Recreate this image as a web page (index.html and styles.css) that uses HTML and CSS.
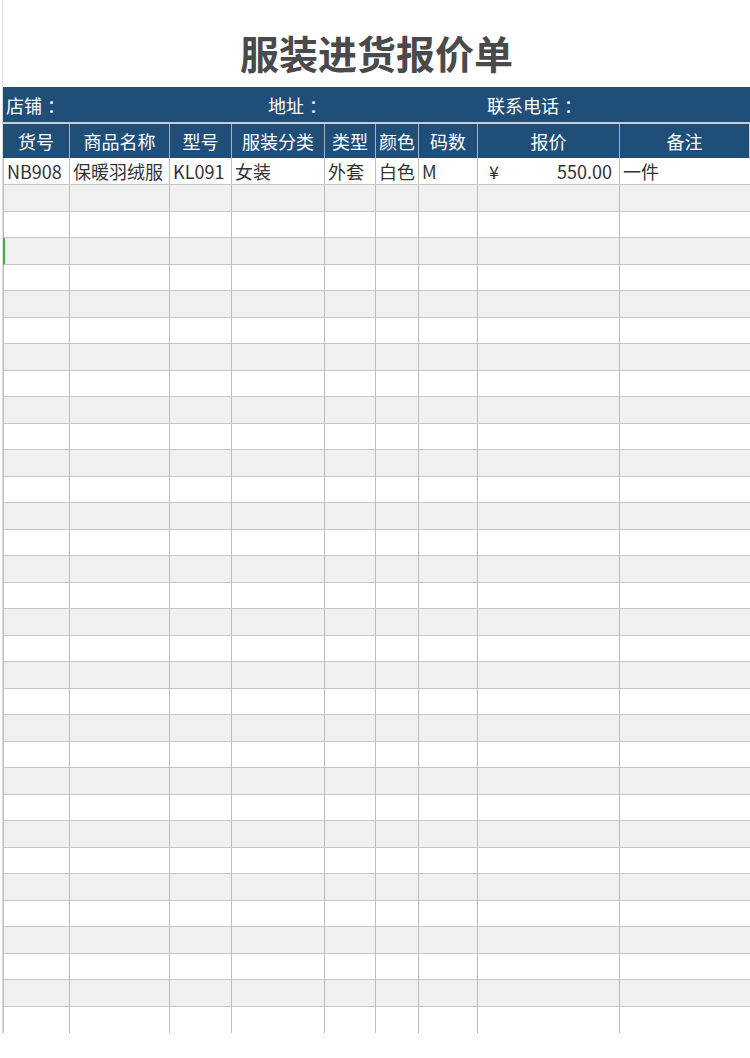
FILE: index.html
```html
<!DOCTYPE html>
<html lang="zh-CN">
<head>
  <meta charset="UTF-8">
  <title>服装进货报价单</title>
  <link rel="stylesheet" href="styles.css">
</head>
<body>

  <div class="sheet">
    <h1 class="title">服装进货报价单</h1>

    <table class="quote">
      <colgroup>
        <col style="width:67px">
        <col style="width:100px">
        <col style="width:62px">
        <col style="width:93px">
        <col style="width:51px">
        <col style="width:43px">
        <col style="width:59px">
        <col style="width:142px">
        <col style="width:130px">
      </colgroup>
      <thead>
        <tr class="info">
          <td colspan="3" class="shop">店铺<span class="colon">：</span></td>
          <td colspan="4" class="addr">地址<span class="colon">：</span></td>
          <td colspan="2" class="tel">联系电话<span class="colon">：</span></td>
        </tr>
        <tr class="cols">
          <th>货号</th>
          <th>商品名称</th>
          <th>型号</th>
          <th>服装分类</th>
          <th>类型</th>
          <th>颜色</th>
          <th>码数</th>
          <th>报价</th>
          <th>备注</th>
        </tr>
      </thead>
      <tbody>
        <tr>
          <td>NB908</td>
          <td>保暖羽绒服</td>
          <td>KL091</td>
          <td>女装</td>
          <td>外套</td>
          <td>白色</td>
          <td>M</td>
          <td><div class="money"><span>¥</span><span>550.00</span></div></td>
          <td>一件</td>
        </tr>
        <tr><td></td><td></td><td></td><td></td><td></td><td></td><td></td><td></td><td></td></tr>
        <tr><td></td><td></td><td></td><td></td><td></td><td></td><td></td><td></td><td></td></tr>
        <tr><td class="sel"></td><td></td><td></td><td></td><td></td><td></td><td></td><td></td><td></td></tr>
        <tr><td></td><td></td><td></td><td></td><td></td><td></td><td></td><td></td><td></td></tr>
        <tr><td></td><td></td><td></td><td></td><td></td><td></td><td></td><td></td><td></td></tr>
        <tr><td></td><td></td><td></td><td></td><td></td><td></td><td></td><td></td><td></td></tr>
        <tr><td></td><td></td><td></td><td></td><td></td><td></td><td></td><td></td><td></td></tr>
        <tr><td></td><td></td><td></td><td></td><td></td><td></td><td></td><td></td><td></td></tr>
        <tr><td></td><td></td><td></td><td></td><td></td><td></td><td></td><td></td><td></td></tr>
        <tr><td></td><td></td><td></td><td></td><td></td><td></td><td></td><td></td><td></td></tr>
        <tr><td></td><td></td><td></td><td></td><td></td><td></td><td></td><td></td><td></td></tr>
        <tr><td></td><td></td><td></td><td></td><td></td><td></td><td></td><td></td><td></td></tr>
        <tr><td></td><td></td><td></td><td></td><td></td><td></td><td></td><td></td><td></td></tr>
        <tr><td></td><td></td><td></td><td></td><td></td><td></td><td></td><td></td><td></td></tr>
        <tr><td></td><td></td><td></td><td></td><td></td><td></td><td></td><td></td><td></td></tr>
        <tr><td></td><td></td><td></td><td></td><td></td><td></td><td></td><td></td><td></td></tr>
        <tr><td></td><td></td><td></td><td></td><td></td><td></td><td></td><td></td><td></td></tr>
        <tr><td></td><td></td><td></td><td></td><td></td><td></td><td></td><td></td><td></td></tr>
        <tr><td></td><td></td><td></td><td></td><td></td><td></td><td></td><td></td><td></td></tr>
        <tr><td></td><td></td><td></td><td></td><td></td><td></td><td></td><td></td><td></td></tr>
        <tr><td></td><td></td><td></td><td></td><td></td><td></td><td></td><td></td><td></td></tr>
        <tr><td></td><td></td><td></td><td></td><td></td><td></td><td></td><td></td><td></td></tr>
        <tr><td></td><td></td><td></td><td></td><td></td><td></td><td></td><td></td><td></td></tr>
        <tr><td></td><td></td><td></td><td></td><td></td><td></td><td></td><td></td><td></td></tr>
        <tr><td></td><td></td><td></td><td></td><td></td><td></td><td></td><td></td><td></td></tr>
        <tr><td></td><td></td><td></td><td></td><td></td><td></td><td></td><td></td><td></td></tr>
        <tr><td></td><td></td><td></td><td></td><td></td><td></td><td></td><td></td><td></td></tr>
        <tr><td></td><td></td><td></td><td></td><td></td><td></td><td></td><td></td><td></td></tr>
        <tr><td></td><td></td><td></td><td></td><td></td><td></td><td></td><td></td><td></td></tr>
        <tr><td></td><td></td><td></td><td></td><td></td><td></td><td></td><td></td><td></td></tr>
        <tr><td></td><td></td><td></td><td></td><td></td><td></td><td></td><td></td><td></td></tr>
        <tr><td></td><td></td><td></td><td></td><td></td><td></td><td></td><td></td><td></td></tr>
      </tbody>
    </table>
  </div>

</body>
</html>
```

FILE: styles.css
```css
/* Base */
* { box-sizing: border-box; margin:0; padding:0; }
body {
  font-family: "Noto Sans CJK SC", "Noto Sans", sans-serif;
  background: #fff;
  color: #333;
}

/* Sheet */
.sheet {
  margin-left: 2px;
  border-left: 1px solid #dcdcdc;
}
.title {
  height: 87px;
  padding-top: 28px;
  text-align: center;
  font-size: 39px;
  line-height: 48px;
  font-weight: bold;
  color: #4a4a4a;
}

/* Table */
.quote {
  width: 747px;
  table-layout: fixed;
  border-collapse: separate;
  border-spacing: 0;
  font-size: 18px;
}
.info td {
  height: 37px;
  background: #1f4e79;
  color: #fff;
  border-bottom: 2px solid #c3cfdb;
  white-space: nowrap;
}
.info .shop { padding-left: 3px; }
.info .addr { padding-left: 36px; }
.info .tel  { padding-left: 9px; }
.colon { padding-left: 5px; }

.cols th {
  height: 34px;
  background: #1f4e79;
  color: #fff;
  font-weight: normal;
  border-right: 1px solid #9fb2c6;
  white-space: nowrap;
}
.cols th:last-child { border-right-color: #c3cfdb; }

tbody td {
  height: 26.5px;
  padding: 0 3px;
  border-right: 1px solid #bdbdbd;
  border-bottom: 1px solid #c6c6c6;
  white-space: nowrap;
  overflow: hidden;
  color: #333;
}
tbody td:first-child { border-left: 1px solid #bdbdbd; }
tbody td:last-child { border-right: none; }
tbody tr:nth-child(even) td { background: #f0f0f0; }
tbody tr:last-child td { border-bottom: none; }
tbody td.sel { border-left: 2px solid #3fae49; }

.money {
  display: flex;
  justify-content: space-between;
  padding: 0 4px 0 8px;
}
```
